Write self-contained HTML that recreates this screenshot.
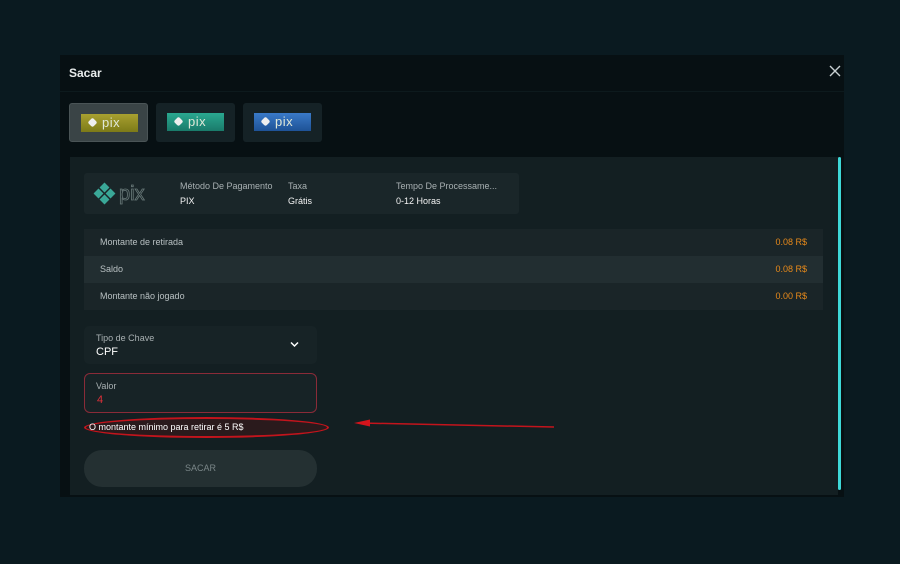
<!DOCTYPE html>
<html><head><meta charset="utf-8"><style>
*{margin:0;padding:0;box-sizing:border-box}
body{width:900px;height:564px;background:#0a1a20;font-family:"Liberation Sans",sans-serif;position:relative;overflow:hidden;color:#fff}
.modal{position:absolute;left:60px;top:55px;width:784px;height:442px;background:#071013}
.title{position:absolute;left:69px;top:66px;font-size:12px;font-weight:bold;color:#e8ecec}
.hline{position:absolute;left:60px;top:91px;width:784px;height:1px;background:#0d1a1d}
.tab{position:absolute;top:103px;width:79px;height:39px;border-radius:3px;background:#152226}
.tab.a{background:#3a4446;border:1px solid #4a5456}
.pb{position:absolute;left:11px;top:10px;width:57px;height:18px;font-size:13px;color:#e0e8d8;padding-left:21px;line-height:17px;font-weight:300;letter-spacing:.5px}
.pb:before{content:"";position:absolute;left:8px;top:5px;width:7px;height:7px;background:#eee;transform:rotate(45deg);border-radius:2px}
.panel{position:absolute;left:70px;top:157px;width:768px;height:338px;background:#131f22}
.sb{position:absolute;left:838px;top:157px;width:3px;height:333px;background:#3ed8d8;border-radius:2px}
.info{position:absolute;left:84px;top:173px;width:435px;height:41px;background:#1a2629;border-radius:3px;font-size:9px}
.lbl{position:absolute;color:#a8b0b2}
.val{position:absolute;color:#f4f4f4}
.rows{position:absolute;left:84px;top:229px;width:739px}
.row{height:27px;line-height:27px;font-size:9px;color:#b8c0c2;padding:0 16px;display:flex;justify-content:space-between;background:#1a2528}
.row.b{background:#222e31}
.row span:last-child{color:#e88a1a}
.sel{position:absolute;left:84px;top:326px;width:233px;height:38px;background:#172326;border-radius:5px}
.inp{position:absolute;left:84px;top:373px;width:233px;height:40px;background:#172326;border:1px solid #8a2b38;border-radius:6px}
.err{position:absolute;left:84px;top:417px;width:245px;height:21px;border:2px solid #c4141c;border-radius:50%;background:#2a1a1c;font-size:9px;line-height:17px;padding-left:3px;color:#fff}
.btn{position:absolute;left:84px;top:450px;width:233px;height:37px;background:#243032;border-radius:18px;font-size:9px;color:#7a8688;text-align:center;line-height:37px}
</style></head><body>
<div class="modal"></div>
<div class="title">Sacar</div>
<div class="hline"></div>
<svg style="position:absolute;left:829px;top:65px" width="12" height="12"><path d="M1 1L11 11M11 1L1 11" stroke="#c8d0d2" stroke-width="1.4"/></svg>
<div class="tab a" style="left:69px"><div class="pb" style="background:linear-gradient(#a8a030,#7c7a18)">pix</div></div>
<div class="tab" style="left:156px"><div class="pb" style="background:linear-gradient(#2aa890,#1a7a6a)">pix</div></div>
<div class="tab" style="left:243px"><div class="pb" style="background:linear-gradient(#3a7ac8,#1e5296)">pix</div></div>
<div class="panel"></div>
<div class="sb"></div>
<div class="info">
 <svg style="position:absolute;left:8px;top:8px" width="66" height="26"><g fill="#3aa898"><rect x="9" y="3" width="7" height="7" transform="rotate(45 12.5 6.5)"/><rect x="3" y="9" width="7" height="7" transform="rotate(45 6.5 12.5)"/><rect x="15" y="9" width="7" height="7" transform="rotate(45 18.5 12.5)"/><rect x="9" y="15" width="7" height="7" transform="rotate(45 12.5 18.5)"/></g><text x="27" y="19" font-family="Liberation Sans" font-size="20" fill="none" stroke="#6a7a7a" stroke-width="0.8">pix</text></svg>
 <div class="lbl" style="left:96px;top:8px">Método De Pagamento</div><div class="val" style="left:96px;top:23px">PIX</div>
 <div class="lbl" style="left:204px;top:8px">Taxa</div><div class="val" style="left:204px;top:23px">Grátis</div>
 <div class="lbl" style="left:312px;top:8px">Tempo De Processame...</div><div class="val" style="left:312px;top:23px">0-12 Horas</div>
</div>
<div class="rows">
 <div class="row"><span>Montante de retirada</span><span>0.08 R$</span></div>
 <div class="row b"><span>Saldo</span><span>0.08 R$</span></div>
 <div class="row"><span>Montante não jogado</span><span>0.00 R$</span></div>
</div>
<div class="sel"><div class="lbl" style="left:12px;top:7px;font-size:9px">Tipo de Chave</div><div style="position:absolute;left:12px;top:20px;font-size:11px">CPF</div>
<svg style="position:absolute;left:206px;top:15px" width="9" height="7"><path d="M1 1.5L4.5 5L8 1.5" stroke="#fff" stroke-width="1.5" fill="none"/></svg></div>
<div class="inp"><div class="lbl" style="left:11px;top:7px;font-size:9px">Valor</div><div style="position:absolute;left:12px;top:20px;font-size:11px;color:#e0303a">4</div></div>
<div class="err">O montante mínimo para retirar é 5 R$</div>
<svg style="position:absolute;left:350px;top:418px" width="210" height="14"><path d="M10 5L204 9" stroke="#c4141c" stroke-width="1.5"/><path d="M4 5L20 1.5L20 8.5Z" fill="#d4141c"/></svg>
<div class="btn">SACAR</div>
</body></html>
